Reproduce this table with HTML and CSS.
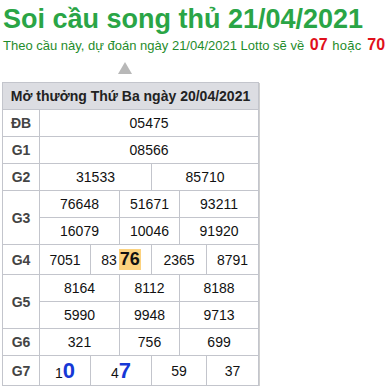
FILE: index.html
```html
<!DOCTYPE html>
<html lang="vi">
<head>
<meta charset="utf-8">
<link rel="stylesheet" href="styles.css">
</head>
<body>
<div class="page">
  <h1 class="title">Soi cầu song thủ 21/04/2021</h1>
  <p class="subtitle">Theo cầu này, dự đoán ngày 21/04/2021 Lotto sẽ về <b class="hl">07</b> <span class="or">hoặc</span> <b class="hl">70</b></p>
  <div class="arrow"></div>
  <table class="kq">
    <colgroup>
      <col class="c-label"><col class="c1"><col class="c2"><col class="c3"><col class="c4"><col class="c5"><col class="c6">
    </colgroup>
    <thead>
      <tr><th colspan="7" class="head">Mở thưởng Thứ Ba ngày 20/04/2021</th></tr>
    </thead>
    <tbody>
      <tr><td class="lbl">ĐB</td><td colspan="6">05475</td></tr>
      <tr><td class="lbl">G1</td><td colspan="6">08566</td></tr>
      <tr><td class="lbl">G2</td><td colspan="3">31533</td><td colspan="3">85710</td></tr>
      <tr><td class="lbl" rowspan="2">G3</td><td colspan="2">76648</td><td colspan="2">51671</td><td colspan="2">93211</td></tr>
      <tr><td colspan="2">16079</td><td colspan="2">10046</td><td colspan="2">91920</td></tr>
      <tr class="r-g4"><td class="lbl">G4</td><td>7051</td><td colspan="2">83<span class="mark">76</span></td><td colspan="2">2365</td><td>8791</td></tr>
      <tr><td class="lbl" rowspan="2">G5</td><td colspan="2">8164</td><td colspan="2">8112</td><td colspan="2">8188</td></tr>
      <tr><td colspan="2">5990</td><td colspan="2">9948</td><td colspan="2">9713</td></tr>
      <tr><td class="lbl">G6</td><td colspan="2">321</td><td colspan="2">756</td><td colspan="2">699</td></tr>
      <tr class="r-g7"><td class="lbl">G7</td><td>1<span class="big">0</span></td><td colspan="2">4<span class="big">7</span></td><td colspan="2">59</td><td>37</td></tr>
    </tbody>
  </table>
</div>
</body>
</html>
```

FILE: styles.css
```css
html, body {
  margin: 0;
  padding: 0;
  background: #ffffff;
}
.page {
  padding: 4px 0 0 3px;
  font-family: "Liberation Sans", Arial, sans-serif;
}
.title {
  margin: 0;
  font-size: 27px;
  line-height: 31px;
  font-weight: bold;
  color: #2aa546;
}
.subtitle {
  margin: 2px 0 0 0;
  font-size: 13px;
  line-height: 16px;
  color: #1f8c2c;
}
.hl {
  color: #e0101c;
  font-size: 16px;
  margin: 0 1px 0 2px;
}
.or {
  letter-spacing: 0.3px;
}
.arrow {
  width: 0;
  height: 0;
  margin: 8px 0 0 115px;
  border-left: 7.5px solid transparent;
  border-right: 7.5px solid transparent;
  border-bottom: 12px solid #b8b8b8;
}
.kq {
  margin-top: 8px;
  margin-left: -1px;
  border-collapse: collapse;
  table-layout: fixed;
  width: 257px;
  border: 1px solid #c3c5cc;
  box-shadow: 1px 1px 0 #d0d0d0;
  font-size: 14px;
  color: #111;
}
.c-label { width: 37px; }
.c1 { width: 51px; }
.c2 { width: 29px; }
.c3 { width: 32px; }
.c4 { width: 28px; }
.c5 { width: 27px; }
.c6 { width: 52px; }
.kq th, .kq td {
  border: 1px solid #c3c5cc;
  padding: 0;
  height: 26px;
  text-align: center;
  white-space: nowrap;
}
.head {
  background: #dcdde2;
  font-weight: bold;
  color: #222;
  height: 27px;
}
.lbl {
  font-weight: bold;
  color: #444;
}
.r-g4 td { height: 29px; }
.mark {
  display: inline-block;
  background: #fcd27e;
  font-weight: bold;
  font-size: 18px;
  line-height: 21px;
  padding: 0 1px;
  margin-left: 2px;
  color: #111;
}
.r-g7 td { height: 29px; }
.big {
  color: #1638d6;
  font-weight: bold;
  font-size: 22px;
  line-height: 1;
}
```
